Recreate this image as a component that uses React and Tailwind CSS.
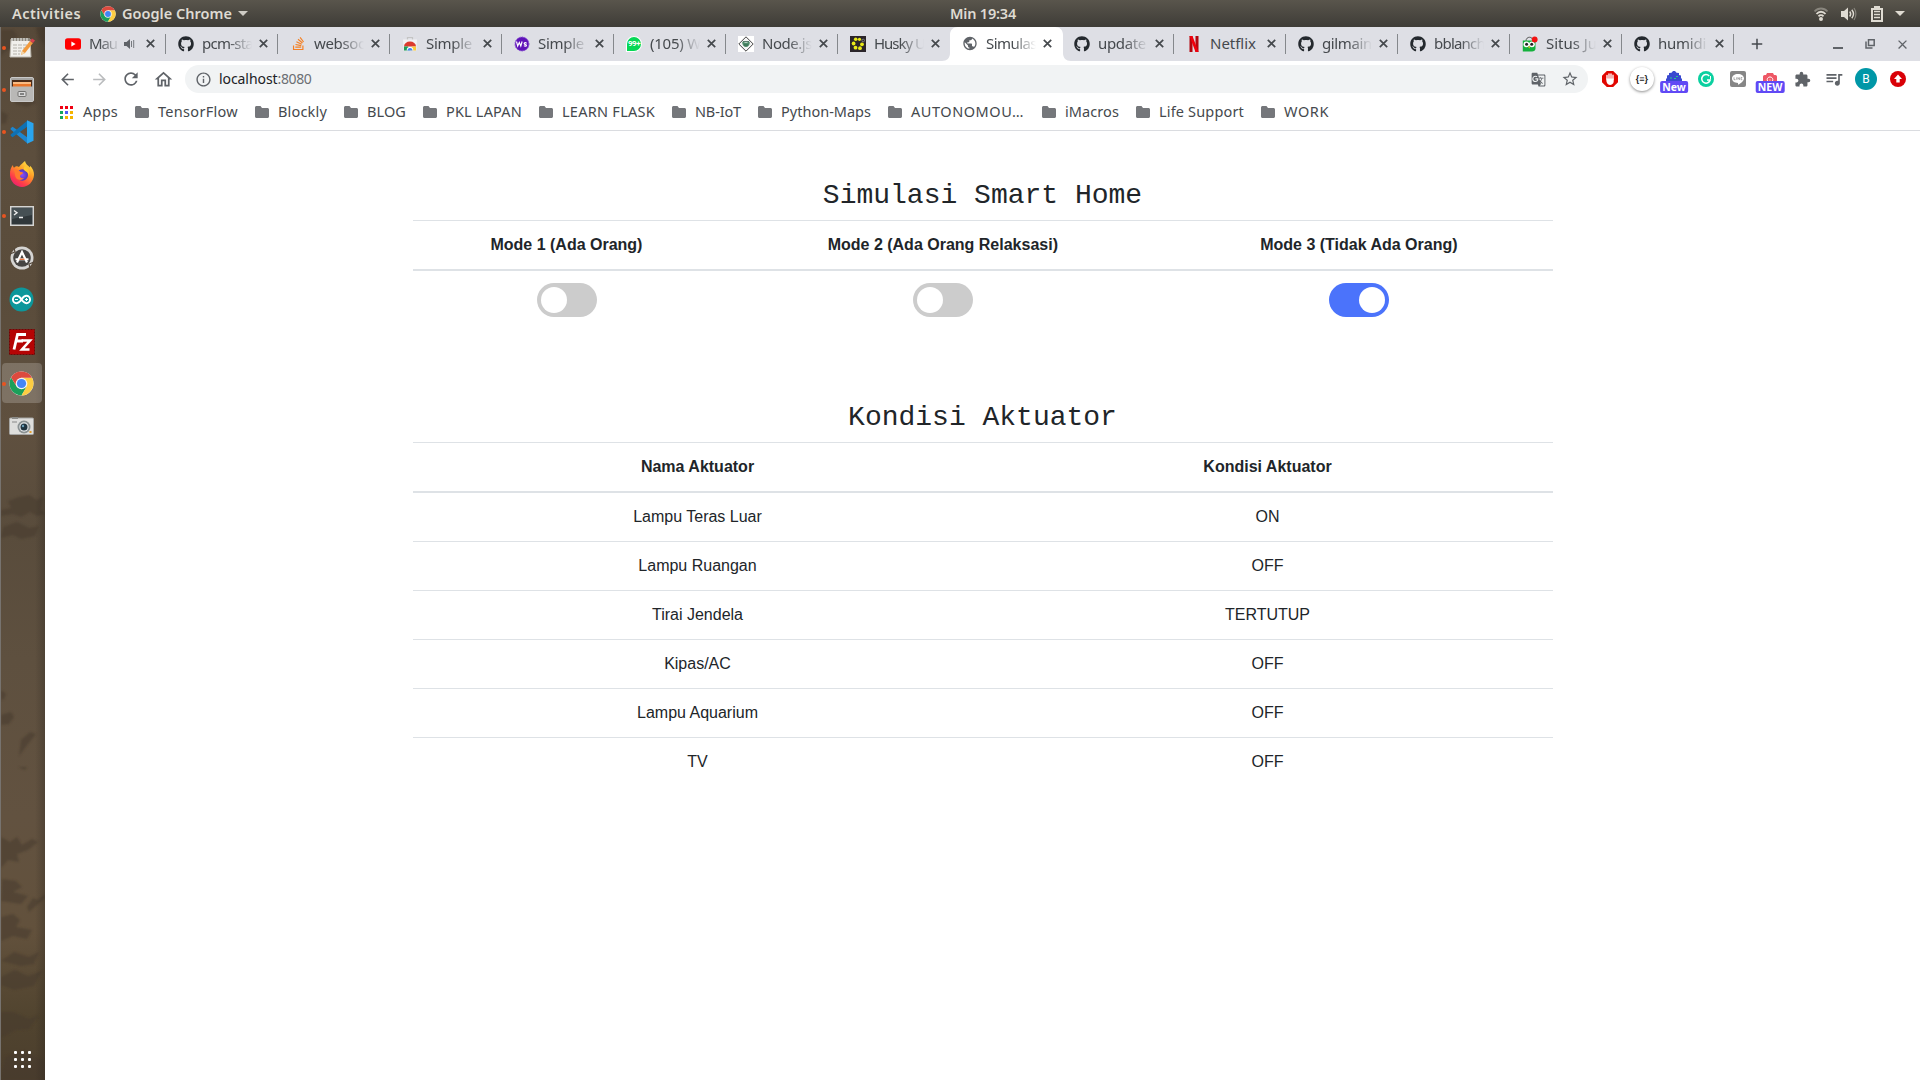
import React, { useLayoutEffect, useRef } from "react";
import { FaGithub, FaStackOverflow } from "react-icons/fa";
import {
  MdArrowBack,
  MdArrowForward,
  MdRefresh,
  MdOutlineHome,
  MdInfoOutline,
  MdGTranslate,
  MdStarBorder,
  MdExtension,
  MdQueueMusic,
  MdPublic,
  MdClose,
  MdAdd,
} from "react-icons/md";

/* Text whose tracking is adjusted so that it fills the given width. */
function Fit({ w, children, className = "" }) {
  const ref = useRef(null);
  useLayoutEffect(() => {
    const el = ref.current;
    el.style.letterSpacing = "0px";
    const natural = el.getBoundingClientRect().width;
    el.style.letterSpacing = (w - natural) / el.textContent.length + "px";
  }, [w]);
  return (
    <span ref={ref} className={"inline-block shrink-0 whitespace-pre " + className}>
      {children}
    </span>
  );
}

function Chrome({ size }) {
  return (
    <svg width={size} height={size} viewBox="0 0 48 48">
      <circle cx="24" cy="24" r="23" fill="#fff" />
      <path d="M4.1 12.5A23 23 0 0 0 24 47L34 30 24 24 14.5 29.5Z" fill="#1c9f5a" />
      <path d="M24 13H44.2A23 23 0 0 1 24 47L33.5 30Z" fill="#fdcd42" />
      <path d="M4.1 12.5L14.5 29.5 24 24V13H44.2A23 23 0 0 0 4.1 12.5Z" fill="#dd4a3e" />
      <circle cx="24" cy="24" r="11.2" fill="#f4f4f4" />
      <circle cx="24" cy="24" r="8.8" fill="#4386f5" />
    </svg>
  );
}

const Github = () => <FaGithub size={16} color="#24292e" />;

const YouTube = () => (
  <svg width="16" height="16" viewBox="0 0 16 16">
    <rect y="2.3" width="16" height="11.4" rx="2.6" fill="#f00" />
    <path d="M6.4 5.6v4.8L10.6 8z" fill="#fff" />
  </svg>
);

const WebStore = () => (
  <svg width="16" height="16" viewBox="0 0 16 16">
    <path d="M5.500 4V1.500h5V4" fill="none" stroke="#c4c4c4" strokeWidth="1.200" />
    <path d="M1 3.500h14l-.7 11H1.700z" fill="#f1f2f4" />
    <path d="M2 10.500a6 5 0 0 1 12 0z" fill="#db3a2e" />
    <path d="M2 10.500h4l2 3.900H2z" fill="#1d9d55" />
    <path d="M14 10.500h-4l-2 3.900h6z" fill="#fbcb3c" />
    <path d="M4.700 14.400a3.300 3.300 0 1 1 6.600 0z" fill="#fff" />
    <path d="M5.500 14.400a2.500 2.500 0 1 1 5 0z" fill="#4486f4" />
  </svg>
);

const WsBall = () => (
  <svg width="16" height="16" viewBox="0 0 16 16">
    <circle cx="8" cy="8" r="7" fill="#5f13b8" stroke="#8d55d6" strokeDasharray="1.500 1" />
    <path d="M2.500 5.500l1.200 4.500L5.300 6.500l1.500 3.500 1.300-4.500M12.600 7.300c-1.200-1.200-3-.4-2.200.7.7.700 2 .300 2 1.400s-1.700 1-2.500.2" fill="none" stroke="#fff" strokeWidth="1.200" />
  </svg>
);

const WhatsApp = () => (
  <div className="flex h-4 w-4 shrink-0 items-center justify-center rounded-full rounded-bl-sm border border-white bg-[#06d755]">
    <span className="font-['Roboto',sans-serif] text-[8px] leading-none font-bold tracking-[-0.500px] text-white">99+</span>
  </div>
);

const NodeRed = () => (
  <svg width="16" height="16" viewBox="0 0 16 16">
    <rect width="16" height="16" fill="#fff" />
    <path d="M8 .8L15.200 8 8 15.200.8 8z" fill="#f4f4f4" stroke="#444" />
    <path d="M4.200 6.300c1.200-1.500 2 .6 3.800.3 1.800.3 2.600-1.800 3.800-.3 0 3-1.800 4.700-3.800 4.700S4.200 9.300 4.200 6.300z" fill="#4d8b69" />
    <path d="M5 5.500h6M6 9h4" stroke="#2f5e48" strokeWidth=".8" />
  </svg>
);

const Husky = () => (
  <svg width="16" height="16" viewBox="0 0 16 16">
    <rect width="16" height="16" fill="#2b2529" />
    <g fill="#e9ea18">
      <circle cx="5.700" cy="3.300" r="1.800" />
      <circle cx="9.500" cy="3.300" r="1.600" />
      <circle cx="3.600" cy="7.500" r="1.900" />
      <circle cx="12" cy="8.300" r="1.900" />
      <circle cx="5.500" cy="11.700" r="1.900" />
      <circle cx="10" cy="12.200" r="1.900" />
    </g>
    <circle cx="13.200" cy="4.500" r="1.300" fill="none" stroke="#999" strokeWidth=".7" />
  </svg>
);

const Netflix = () => (
  <svg width="16" height="16" viewBox="0 0 16 16">
    <path d="M3.500 0h3v16h-3zM9.500 0h3v16h-3z" fill="#b1060f" />
    <path d="M3.500 0h3l6 16h-3z" fill="#f0000c" />
  </svg>
);

const Tokopedia = () => (
  <svg width="16" height="16" viewBox="0 0 16 16">
    <path d="M4 5c0-5 7-5 7 0" fill="none" stroke="#555" strokeWidth="1" />
    <path d="M.8 4.500h12.700v8c0 2-1.500 3-3.500 3H.8z" fill="#14b13c" />
    <circle cx="4.400" cy="8.300" r="2.900" fill="#fff" />
    <circle cx="9.900" cy="8.300" r="2.900" fill="#fff" />
    <circle cx="4.600" cy="8.300" r="1.500" fill="#222" />
    <circle cx="9.700" cy="8.300" r="1.500" fill="#222" />
    <path d="M6 10.500h2.400L7.200 12.500z" fill="#f6c51b" />
    <circle cx="12.700" cy="3.500" r="2.900" fill="#f21313" />
  </svg>
);

const tabs = [
  { icon: <YouTube />, text: "Mau", w: 28, audio: true },
  { icon: <Github />, text: "pcm-sta", w: 51 },
  { icon: <FaStackOverflow size={15} color="#f48024" />, text: "websoc", w: 51 },
  { icon: <WebStore />, text: "Simple", w: 46 },
  { icon: <WsBall />, text: "Simple", w: 46 },
  { icon: <WhatsApp />, text: "(105) W", w: 51 },
  { icon: <NodeRed />, text: "Node.js", w: 50 },
  { icon: <Husky />, text: "Husky U", w: 51 },
  { icon: <MdPublic size={17} color="#5f6368" />, text: "Simulas", w: 51, active: true },
  { icon: <Github />, text: "update", w: 48 },
  { icon: <Netflix />, text: "Netflix", w: 46, full: true },
  { icon: <Github />, text: "gilmain", w: 50 },
  { icon: <Github />, text: "bblanch", w: 51 },
  { icon: <Tokopedia />, text: "Situs Ju", w: 51 },
  { icon: <Github />, text: "humidi", w: 48 },
];

function Tab({ t, sep }) {
  const fade = t.full
    ? ""
    : t.audio
    ? " [mask-image:linear-gradient(to_right,#000_10px,transparent_31px)]"
    : " [mask-image:linear-gradient(to_right,#000_26px,transparent_50px)]";
  return (
    <div className="relative h-[34px] w-28 shrink-0">
      {t.active && (
        <svg className="absolute top-0 -left-2" width="130" height="34" viewBox="0 0 130 34">
          <path d="M0 34c5 0 8-3 8-8V8c0-5 3-8 8-8h97c5 0 8 3 8 8v18c0 5 3 8 8 8z" fill="#fff" />
        </svg>
      )}
      <div className={"relative flex h-full items-center pb-px " + (t.audio ? "pl-[11px]" : "pl-3")}>
        <span className="flex w-4 shrink-0 justify-center">{t.icon}</span>
        <span className={"ml-2 text-[15px] text-[#45494d] " + (t.audio ? "w-[29px]" : "w-[52px]") + fade}>
          <Fit w={t.w}>{t.text}</Fit>
        </span>
        {t.audio && (
          <svg className="ml-[6px]" width="11" height="12" viewBox="0 0 11 12">
            <path d="M0 4h2.500L6 1v10L2.500 8H0z" fill="#5f6368" />
            <path d="M7.500 3v6M9.700 2v8" stroke="#777b80" strokeWidth="1" fill="none" />
          </svg>
        )}
        <svg className={t.audio ? "ml-[11px]" : "ml-[5px]"} width="9" height="9" viewBox="0 0 9 9">
          <path d="M.8.8l7.400 7.400M8.200.8L.8 8.200" stroke="#45494d" strokeWidth="1.700" />
        </svg>
      </div>
      {sep && <div className="absolute top-[7px] right-0 h-5 w-px bg-[#85888c]" />}
    </div>
  );
}

const bookmarks = [
  ["TensorFlow", 80, "w-[120px]"],
  ["Blockly", 49, "w-[89px]"],
  ["BLOG", 39, "w-[79px]"],
  ["PKL LAPAN", 76, "w-[116px]"],
  ["LEARN FLASK", 93, "w-[133px]"],
  ["NB-IoT", 46, "w-[86px]"],
  ["Python-Maps", 90, "w-[130px]"],
  ["AUTONOMOU…", 113, "w-[154px]"],
  ["iMacros", 54, "w-[94px]"],
  ["Life Support", 85, "w-[125px]"],
  ["WORK", 45, "w-[80px]"],
];

const appColors = ["#f00012", "#f00012", "#f00012", "#14a85c", "#4c5bf6", "#f5b400", "#14a85c", "#f5b400", "#f5b400"];

/* Dock icons */
const Notes = () => (
  <svg width="26" height="24" viewBox="0 0 26 24">
    <path d="M2 3h19l1 18H1z" fill="#f1f0ec" stroke="#bdb9b0" />
    <path d="M2 2h19v3H2z" fill="#8d897f" />
    <path d="M3 2v3M6 2v3M9 2v3M12 2v3M15 2v3M18 2v3" stroke="#eee" />
    <path d="M4 9h14M4 12h12M4 15h8M4 18h7" stroke="#b5b2aa" strokeDasharray="4 1" />
    <path d="M13 15l8-10 3 2-8 10-4 2z" fill="#f19a3d" />
    <path d="M21 5l2-2.500 3 2L24 7z" fill="#d9414e" />
    <path d="M13 15l3 2-4 2z" fill="#f1d4a8" />
  </svg>
);
const Files = () => (
  <svg width="24" height="25" viewBox="0 0 24 25">
    <rect x=".5" y=".5" width="23" height="24" rx="1.500" fill="#a5a4a2" stroke="#c9c9c9" />
    <rect x="2" y="3" width="20" height="7" fill="#4c2b17" />
    <path d="M3 5h18v5H3z" fill="#e9762b" />
    <path d="M3 6h18" stroke="#ffd3a0" strokeWidth="1.500" />
    <path d="M1 9.500h22V24H1z" fill="#b9b8b6" />
    <rect x="8" y="14.500" width="8" height="5" rx="1" fill="#d8d8d8" stroke="#72716f" />
    <path d="M10 17h4" stroke="#666" strokeWidth="1.500" />
  </svg>
);
const VsCode = () => (
  <svg width="24" height="24" viewBox="0 0 24 24">
    <path d="M.700 8.200L2.600 6.700 17.500 17.500V23.600L.700 9.600z" fill="#1d86cf" />
    <path d="M.700 15.800l1.900 1.500L17.500 6.500V.4L.700 14.400z" fill="#0f71b3" />
    <path d="M17 .3l6.500 3v17.500L17 23.700z" fill="#2aa5ee" />
  </svg>
);
const Firefox = () => (
  <svg width="26" height="26" viewBox="0 0 26 26">
    <defs>
      <linearGradient id="ff" x1=".85" y1="0" x2=".2" y2="1">
        <stop offset="0" stopColor="#fff14a" />
        <stop offset=".4" stopColor="#ff9a26" />
        <stop offset=".75" stopColor="#ff3d49" />
        <stop offset="1" stopColor="#e51c78" />
      </linearGradient>
      <radialGradient id="fp">
        <stop offset="0" stopColor="#8b4dff" />
        <stop offset="1" stopColor="#5038b8" />
      </radialGradient>
    </defs>
    <path d="M1 14C.8 9 2 6 4 4c0 1.500.5 2.200 1 2.700C7 5 8.500 5 10 6c2-3 4-4 6-6 .5 3 3 4.500 5 6.500 0-1 0-1.500-.2-2C24 7.500 25.200 11 25 14c-.5 7-6 12-12 12S1.300 21 1 14z" fill="url(#ff)" />
    <circle cx="13.300" cy="14" r="5.700" fill="url(#fp)" />
    <path d="M5 9c3-1 5.500.2 6.500 2 1 0 2.500 0 2.500 1s-2.500 1.500-3 3c0 1.500 1.500 2.500 4 2-2 3-7 2.500-8.500-1C5.800 14 6 11 5 9z" fill="#ff7a2e" />
    <path d="M16 5c3 2 5 5 4 10-.3-2.500-2-4.500-4-5-2-1.800-1.500-3.500 0-5z" fill="#ffc931" />
  </svg>
);
const Terminal = () => (
  <svg width="24" height="20" viewBox="0 0 24 20">
    <rect x=".75" y=".75" width="22.500" height="18.500" fill="#30373a" stroke="#d5d5d3" strokeWidth="1.500" />
    <path d="M2 2h20v7L2 13z" fill="#465054" />
    <path d="M4 4.500l3 2.200L4 9M9 11.500h4" fill="none" stroke="#eee" strokeWidth="1.400" />
  </svg>
);
const Updater = () => (
  <svg width="24" height="24" viewBox="0 0 24 24">
    <circle cx="12" cy="12" r="11.500" fill="#d5d4d2" />
    <circle cx="12" cy="12" r="8.800" fill="#464442" />
    <path d="M7 16.500L12 6l5 10.500" fill="none" stroke="#fff" strokeWidth="2.200" />
    <path d="M5.500 13.300h13" stroke="#fff" strokeWidth="2" />
    <path d="M9.500 13.300h5" stroke="#e96d33" strokeWidth="1.300" />
    <path d="M0 8l5-2-1-4M24 16l-5 2 1 4" fill="none" stroke="#55483b" strokeWidth="1.200" />
  </svg>
);
const Arduino = () => (
  <svg width="25" height="25" viewBox="0 0 25 25">
    <circle cx="12.500" cy="12.500" r="12" fill="#0d979b" />
    <path d="M12.500 12.500C10.500 9.500 9.300 8.800 7.600 8.800a3.700 3.700 0 0 0 0 7.400c1.700 0 2.900-.7 4.900-3.700s3.200-3.700 4.900-3.700a3.700 3.700 0 0 1 0 7.400c-1.700 0-2.900-.7-4.900-3.700z" fill="none" stroke="#fff" strokeWidth="1.900" />
    <path d="M6 12.500h3M16 12.500h3M17.500 11v3" stroke="#fff" strokeWidth="1" />
  </svg>
);
const FileZilla = () => (
  <svg width="26" height="26" viewBox="0 0 26 26">
    <rect x=".5" y=".5" width="25" height="25" fill="#b50404" stroke="#6f0505" strokeDasharray="2 1" />
    <path d="M5 20.500L8.500 5.500H17M7 12h7" fill="none" stroke="#fff" strokeWidth="2.800" />
    <path d="M12.500 11.500h8.500l-8 9h7.500" fill="none" stroke="#fff" strokeWidth="2.600" />
  </svg>
);
const Camera = () => (
  <svg width="25" height="18" viewBox="0 0 25 18">
    <rect x=".5" y="1" width="24" height="16.500" rx="1" fill="#dededc" stroke="#a5a5a3" />
    <rect x="3" y="0" width="6" height="2" fill="#8b8b88" />
    <path d="M3 5h5" stroke="#888" />
    <circle cx="15" cy="10" r="6.500" fill="#8b9293" />
    <circle cx="15" cy="10" r="4.700" fill="#e2e6e8" />
    <circle cx="15" cy="10" r="3.500" fill="#1f3440" />
    <circle cx="14" cy="9" r="1.200" fill="#6da0bb" />
    <rect x="20.500" y="14" width="2" height="2" fill="#e8a02c" />
  </svg>
);

const dock = [
  { el: <Notes />, run: true },
  { el: <Files />, run: true },
  { el: <VsCode />, run: true },
  { el: <Firefox /> },
  { el: <Terminal />, run: true },
  { el: <Updater /> },
  { el: <Arduino /> },
  { el: <FileZilla /> },
  { el: <Chrome size={25} />, run: true, active: true },
  { el: <Camera /> },
];

/* Mottled wallpaper that shows through the dock */
const Wallpaper = () => (
  <svg className="absolute inset-0" width="44" height="1053" viewBox="0 0 44 1053">
    <defs>
      <filter id="soft" x="-50%" y="-50%" width="200%" height="200%">
        <feGaussianBlur stdDeviation="1.300" />
      </filter>
    </defs>
    <g fill="#463b2e" opacity=".55" filter="url(#soft)">
      <path d="M0 3h12l5 6-6 5 3 6-9 4-5 5zM34 0h10v18l-5-5zM14 66l9 3 8-1 4 8-9 4-12-3zM0 84l7 4-2 8-5 1z" />
      <path d="M18 470l10-2 8 5 6-3-2 12 4 5-8 2-7-4-9 5-8-3-12 2v-6l10-2-3-7zM2 500l14-5 12 6 10-2-4 10-14 3-8-4-12 3z" />
      <path d="M0 663l5 4-2 5-3 1zM0 688l10-3 3 5-5 7-8 1zM20 713l9-8 6 2-8 10-9 12zM17 740h9l-2 3z" />
      <path d="M0 810l9 5 7-5 5 8 10-6 6 3-10 8-11 4 2 8-11-2-7 8zM1 852l14 2 6 6-9 5 15 4-7 8-20-3zM26 880l6-9 5 2 7-6v4l-16 14zM0 890l12-3 7 6-4 7 16 3-5 9-14-3-12 5zM13 925l15 5 10-5-5 12-13 2-20-5zM0 950l14-7 13 6 14-5-8 15-20 4-13-5z" />
      <path d="M0 985h12l16 7 10-4-10 14-14 1-14 8zM4 1030l18-6 22 10v19H0z" />
    </g>
  </svg>
);

function Dock() {
  return (
    <aside className="relative flex w-[45px] shrink-0 flex-col justify-between border-l border-[#77736f] bg-[linear-gradient(to_bottom,#574939_0%,#5c4e3d_12%,#5a4c3b_25%,#5f503f_38%,#594c3c_48%,#5e503f_60%,#625240_75%,#62513c_86%,#51442f_94%,#4b3e2d_100%)]">
      <Wallpaper />
      <div className="absolute inset-y-0 right-0 w-[10px] bg-[linear-gradient(to_right,transparent,rgba(40,34,28,0.300))]" />
      <div className="relative">
        {dock.map((d, i) => (
          <div key={i} className="relative flex h-[42px] items-center justify-center pr-[3px] pb-px">
            {d.active && <div className="absolute top-0 left-[1px] h-10 w-10 rounded-[4px] bg-white/20" />}
            {d.run && <div className="absolute top-[19px] left-[1px] h-1 w-1 rounded-full bg-[#e95420]" />}
            <div className="relative">{d.el}</div>
          </div>
        ))}
      </div>
      <div className="relative mb-[12px] ml-[13px] grid w-[17px] grid-cols-3 gap-[4px]">
        {Array.from({ length: 9 }, (_, i) => (
          <div key={i} className="h-[3px] w-[3px] rounded-[1px] bg-white" />
        ))}
      </div>
    </aside>
  );
}

function TopBar() {
  return (
    <header className="grid h-[27px] shrink-0 grid-cols-3 items-center bg-[linear-gradient(to_bottom,#59554c,#3e3c37)] text-[14.500px] leading-none font-semibold text-[#dfdbd2]">
      <div className="flex items-center pl-3">
        <Fit w={69}>Activities</Fit>
        <span className="ml-[19px]">
          <Chrome size={16} />
        </span>
        <Fit w={110} className="ml-[6px]">Google Chrome</Fit>
        <svg className="ml-[6px]" width="10" height="5" viewBox="0 0 10 5">
          <path d="M0 0h10L5 5z" fill="#cfccc5" />
        </svg>
      </div>
      <div className="flex justify-center pb-px pl-[46px]">
        <div className="w-[66px]">
          <Fit w={66}>Min 19:34</Fit>
        </div>
      </div>
      <div className="flex items-center justify-end pr-[15px]">
        <svg width="14" height="14" viewBox="0 0 14 14" fill="none" stroke="#dfdbd2" strokeWidth="1.800">
          <path d="M.5 4.500C4 .5 10 .5 13.500 4.500" opacity=".4" />
          <path d="M2.500 7c2.500-3 6.500-3 9 0M4.500 9.300c1.300-1.500 3.700-1.500 5 0" />
          <circle cx="7" cy="12" r="1.100" fill="#dfdbd2" />
        </svg>
        <svg className="ml-[13px]" width="16" height="14" viewBox="0 0 16 14">
          <path d="M0 4h3l4-3.500v13L3 10H0z" fill="#dfdbd2" />
          <path d="M8.700 4.500c1.200 1.500 1.200 3.500 0 5M10.800 2.800c2 2.500 2 6 0 8.500" fill="none" stroke="#dfdbd2" strokeWidth="1.400" />
          <path d="M13 1c2.500 3.500 2.500 8.500 0 12" fill="none" stroke="#dfdbd2" strokeWidth="1.200" opacity=".4" />
        </svg>
        <svg className="ml-[14px]" width="12" height="16" viewBox="0 0 12 16">
          <path d="M3 0h6v2h3v14H0V2h3z" fill="#dfdbd2" />
          <path d="M2 4h8v10H2z" fill="#4b4842" />
          <path d="M3 5.500h6M3 8.500h6M3 11.500h6" stroke="#dfdbd2" strokeWidth="1.500" />
        </svg>
        <svg className="ml-[12px]" width="10" height="5" viewBox="0 0 10 5">
          <path d="M0 0h10L5 5z" fill="#dfdbd2" />
        </svg>
      </div>
    </header>
  );
}

const Slot = ({ children }) => <div className="flex h-8 w-8 shrink-0 items-center justify-center">{children}</div>;

const Badge = ({ children }) => (
  <span className="absolute bottom-0 left-1/2 flex h-[12px] -translate-x-1/2 items-center rounded-[2px] bg-[#6049f5] px-[2px] font-['Open_Sans',sans-serif] text-[10.500px] leading-none font-bold text-white">
    {children}
  </span>
);

function Toolbar() {
  return (
    <div className="flex h-9 items-center pl-[6px] text-[#5f6368]">
      <Slot><MdArrowBack size={19} /></Slot>
      <Slot><MdArrowForward size={19} color="#babcbe" /></Slot>
      <Slot><MdRefresh size={20} /></Slot>
      <Slot><MdOutlineHome size={21} /></Slot>
      <div className="ml-[6px] flex h-7 w-[1403px] shrink-0 items-center rounded-full bg-[#f1f3f4] pl-[10px]">
        <MdInfoOutline size={17} />
        <span className="ml-[7px] flex pb-[2px] text-[14px]">
          <Fit w={58.5} className="text-[#202124]">localhost</Fit>
          <Fit w={34} className="text-[#6b6f73]">:8080</Fit>
        </span>
        <span className="mr-[2px] ml-auto flex">
          <Slot><MdGTranslate size={15} /></Slot>
          <Slot><MdStarBorder size={18} /></Slot>
        </span>
      </div>
      <div className="ml-[6px] flex">
        <Slot>
          <svg width="16" height="16" viewBox="0 0 16 16">
            <path d="M4.800 0h6.400L16 4.800v6.400L11.200 16H4.800L0 11.200V4.800z" fill="#e10600" />
            <path d="M5 8V4.500M7 7.500V3M9 7.500V3M11 8.500V4.300" stroke="#fff" strokeWidth="1.400" strokeLinecap="round" />
            <path d="M4.300 7.500h7.400v3c0 3.500-5 4.500-6.400 2-1-1.500-1-3-1-5z" fill="#fff" />
          </svg>
        </Slot>
        <Slot>
          <div className="flex h-6 w-6 items-center justify-center rounded-full bg-white shadow-[0_1px_3px_rgba(0,0,0,0.450)]">
            <span className="font-['Liberation_Sans',sans-serif] text-[9px] leading-none font-bold text-[#222]">{"{≡}"}</span>
          </div>
        </Slot>
        <Slot>
          <div className="relative h-[22px] w-[26px] translate-y-[3px]">
            <svg className="mx-auto" width="16" height="12" viewBox="0 0 16 12">
              <path d="M0 12V8l1-1V4.500l2-.5V2l2.500-.2L7 0h2l1.500 1.800L13 2v2l2 .5V7l1 1v4z" fill="#3949d0" />
              <path d="M4 7h2M8 7.500h2M10 5.500h2" stroke="#28c98e" strokeWidth="1.200" />
            </svg>
            <Badge>New</Badge>
          </div>
        </Slot>
        <Slot>
          <svg width="16" height="16" viewBox="0 0 16 16">
            <circle cx="8" cy="8" r="8" fill="#0bd0a0" />
            <path d="M11.200 4.900A4.300 4.300 0 1 0 12.200 9H9" fill="none" stroke="#fff" strokeWidth="1.500" />
            <path d="M12.500 5v3" stroke="#fff" strokeWidth="1" />
          </svg>
        </Slot>
        <Slot>
          <svg width="16" height="16" viewBox="0 0 16 16">
            <rect width="16" height="16" rx="2" fill="#868686" />
            <path d="M8 3c3.500 0 6 2 6 4.500 0 2.300-3 4.700-6 6.300v-1.900c-3.500 0-6-1.900-6-4.400S4.500 3 8 3z" fill="#fff" />
            <path d="M4 6.300v2.400h1.500M6.700 6.300v2.400M8 8.700V6.500l1.600 2.200V6.300M12.300 6.500h-1.200v2.200h1.200" fill="none" stroke="#888" strokeWidth=".7" />
          </svg>
        </Slot>
        <Slot>
          <div className="relative h-[22px] w-[28px] translate-y-[3px]">
            <svg className="mx-auto" width="16" height="12" viewBox="0 0 16 12">
              <path d="M1 5.500q0-1.500 1.500-1.500H4l1-2h6l1 2h1.500Q15 4 15 5.500V12H1z" fill="#ee5866" />
              <path d="M5.500 10a2.800 2.800 0 1 1 5 0M8 8.500v1" fill="none" stroke="#fff" />
            </svg>
            <Badge>NEW</Badge>
          </div>
        </Slot>
        <Slot><MdExtension size={17} /></Slot>
        <Slot><MdQueueMusic size={20} /></Slot>
        <Slot>
          <div className="flex h-[22px] w-[22px] items-center justify-center rounded-full bg-[#0097a7] font-['Roboto',sans-serif] text-[12px] text-white">B</div>
        </Slot>
        <Slot>
          <svg width="16" height="16" viewBox="0 0 16 16">
            <circle cx="8" cy="8" r="8" fill="#d90007" />
            <path d="M8 3.500L12 8H9.700v3.500H6.300V8H4z" fill="#fff" />
          </svg>
        </Slot>
      </div>
    </div>
  );
}

function Toggle({ on }) {
  return (
    <span className={"inline-flex h-[34px] w-[60px] items-center rounded-[34px] p-1 align-top " + (on ? "justify-end bg-[#4b73fb]" : "bg-[#ccc]")}>
      <span className="h-[26px] w-[26px] rounded-full bg-white" />
    </span>
  );
}

const rows = [
  ["Lampu Teras Luar", "ON"],
  ["Lampu Ruangan", "OFF"],
  ["Tirai Jendela", "TERTUTUP"],
  ["Kipas/AC", "OFF"],
  ["Lampu Aquarium", "OFF"],
  ["TV", "OFF"],
];

function Page() {
  return (
    <main className="mx-auto w-[1140px] pt-12 text-center font-['Liberation_Sans',sans-serif] text-base leading-6 text-[#212529]">
      <h3 className="mb-[7px] font-['Liberation_Mono',monospace] text-[28px] leading-[34px]">Simulasi Smart Home</h3>
      <table className="w-full border-collapse">
        <thead>
          <tr>
            {["Mode 1 (Ada Orang)", "Mode 2 (Ada Orang Relaksasi)", "Mode 3 (Tidak Ada Orang)"].map((m) => (
              <th key={m} className="border-t border-b-2 border-[#dee2e6] p-3 font-bold">{m}</th>
            ))}
          </tr>
        </thead>
        <tbody>
          <tr>
            <td className="p-3 pl-[13px]"><Toggle /></td>
            <td className="p-3"><Toggle /></td>
            <td className="p-3"><Toggle on /></td>
          </tr>
        </tbody>
      </table>
      <h3 className="mt-[72px] mb-[7px] font-['Liberation_Mono',monospace] text-[28px] leading-[34px]">Kondisi Aktuator</h3>
      <table className="w-full table-fixed border-collapse">
        <thead>
          <tr>
            <th className="border-t border-b-2 border-[#dee2e6] p-3 font-bold">Nama Aktuator</th>
            <th className="border-t border-b-2 border-[#dee2e6] p-3 font-bold">Kondisi Aktuator</th>
          </tr>
        </thead>
        <tbody>
          {rows.map(([a, b]) => (
            <tr key={a}>
              <td className="border-t border-[#dee2e6] p-3">{a}</td>
              <td className="border-t border-[#dee2e6] p-3">{b}</td>
            </tr>
          ))}
        </tbody>
      </table>
    </main>
  );
}

export default function App() {
  return (
    <div className="flex h-[1080px] w-[1920px] flex-col overflow-hidden bg-white font-['Noto_Sans',sans-serif]">
      <TopBar />
      <div className="flex min-h-0 flex-1">
        <Dock />
        <div className="flex min-w-0 flex-1 flex-col">
          <div className="flex h-[34px] shrink-0 bg-[#dedfe5] pl-[9px]">
            {tabs.map((t, i) => (
              <Tab key={i} t={t} sep={i !== 7 && i !== 8} />
            ))}
            <div className="flex flex-1 items-center pl-[14px] text-[#45494d]">
              <MdAdd size={18} />
              <div className="ml-auto flex pr-[2px] text-[#5f6368]">
                <Slot>
                  <svg width="10" height="10" viewBox="0 0 10 10"><path d="M0 9h10" stroke="#5f6368" strokeWidth="2" /></svg>
                </Slot>
                <Slot>
                  <svg width="10" height="10" viewBox="0 0 10 10" fill="none" stroke="#5f6368" strokeWidth="1.500">
                    <path d="M3.500.8h5.700v5.700H3.500zM1 2.500V9h6.500" />
                  </svg>
                </Slot>
                <Slot><MdClose size={15} /></Slot>
              </div>
            </div>
          </div>
          <Toolbar />
          <div className="flex h-[34px] shrink-0 items-center border-b border-[#dadce0] pb-[3px] pl-[15px] text-[14.500px] text-[#45494d]">
            <div className="flex w-[75px] shrink-0 items-center">
              <div className="mr-[10px] grid w-[13px] grid-cols-3 gap-[2px]">
                {appColors.map((c, i) => (
                  <div key={i} className="h-[3px] w-[3px]" style={{ backgroundColor: c }} />
                ))}
              </div>
              <Fit w={35}>Apps</Fit>
            </div>
            {bookmarks.map(([label, w, box]) => (
              <div key={label} className={"flex shrink-0 items-center " + box}>
                <svg className="mr-[9px]" width="14" height="12" viewBox="0 0 14 12">
                  <path d="M1.500 0h4L7 2h5.500C13.300 2 14 2.700 14 3.500v7c0 .8-.7 1.500-1.500 1.500h-11C.7 12 0 11.300 0 10.500v-9C0 .7.7 0 1.500 0z" fill="#75777b" />
                </svg>
                <Fit w={w}>{label}</Fit>
              </div>
            ))}
          </div>
          <Page />
        </div>
      </div>
    </div>
  );
}
